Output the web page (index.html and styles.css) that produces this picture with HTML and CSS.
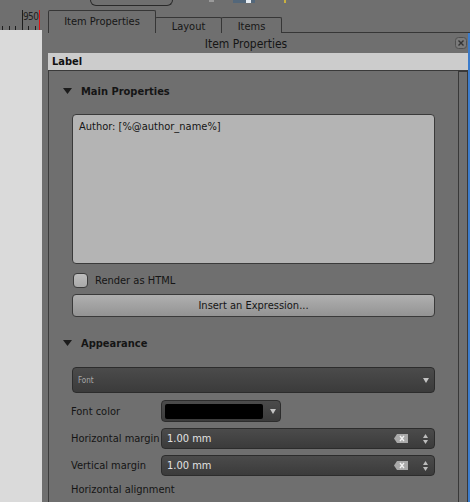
FILE: index.html
```html
<!DOCTYPE html>
<html>
<head>
<meta charset="utf-8">
<link rel="stylesheet" href="styles.css">
</head>
<body>
<div class="app">
  <div class="left">
    <div class="ruler">
      <span class="ruler-major"></span>
      <span class="ruler-num">950</span>
      <span class="ruler-marker"></span>
    </div>
    <div class="canvas-row"><div class="canvas"></div></div>
  </div>
  <div class="right">
    <div class="toolstrip">
      <div class="tb-frame"></div>
      <div class="tb-light"></div>
      <div class="tb-icon"><span class="tb-white"></span></div>
      <div class="tb-yellow"></div>
    </div>
    <div class="tabbar">
      <div class="tab active">Item Properties</div>
      <div class="tab">Layout</div>
      <div class="tab">Items</div>
      <div class="tab-fill"></div>
    </div>
    <div class="dock">
      <div class="dock-title">
        <span class="dock-title-text">Item Properties</span>
        <span class="close">
          <svg width="12" height="12" viewBox="0 0 12 12"><rect x="0.5" y="0.5" width="11" height="11" rx="3" fill="#7a7a7a" stroke="#505050"/><path d="M3.5 3.5 L8.5 8.5 M8.5 3.5 L3.5 8.5" stroke="#333" stroke-width="1.4"/></svg>
        </span>
      </div>
      <div class="label-bar">Label</div>
      <div class="scroll-area">
        <div class="content">
          <div class="section-head">
            <svg width="9" height="6" viewBox="0 0 9 6"><polygon points="0,0 9,0 4.5,6" fill="#1c1c1c"/></svg>
            <span>Main Properties</span>
          </div>
          <div class="textarea">Author: [%@author_name%]</div>
          <div class="check-row">
            <span class="checkbox"></span>
            <span>Render as HTML</span>
          </div>
          <div class="button">Insert an Expression...</div>
          <div class="section-head appearance">
            <svg width="9" height="6" viewBox="0 0 9 6"><polygon points="0,0 9,0 4.5,6" fill="#1c1c1c"/></svg>
            <span>Appearance</span>
          </div>
          <div class="combo">
            <span class="combo-text">Font</span>
            <svg width="6" height="5" viewBox="0 0 6 5"><polygon points="0,0 6,0 3,5" fill="#c4c4c4"/></svg>
          </div>
          <div class="form">
            <span class="form-label">Font color</span>
            <div class="color-btn">
              <span class="swatch"></span>
              <svg width="6" height="5" viewBox="0 0 6 5"><polygon points="0,0 6,0 3,5" fill="#c4c4c4"/></svg>
            </div>
            <span class="form-label">Horizontal margin</span>
            <div class="spin">
              <span class="spin-text">1.00 mm</span>
              <svg class="clear" width="14" height="9" viewBox="0 0 14 9"><path d="M3 0 H14 V9 H3 L0 4.5 Z" fill="#a9a9a9"/><path d="M6 2 L10 7 M10 2 L6 7" stroke="#f2f2f2" stroke-width="1.3"/></svg>
              <svg class="updown" width="5" height="10" viewBox="0 0 5 10"><polygon points="0,4 2.5,0 5,4" fill="#bdbdbd"/><polygon points="0,6 5,6 2.5,10" fill="#bdbdbd"/></svg>
            </div>
            <span class="form-label">Vertical margin</span>
            <div class="spin">
              <span class="spin-text">1.00 mm</span>
              <svg class="clear" width="14" height="9" viewBox="0 0 14 9"><path d="M3 0 H14 V9 H3 L0 4.5 Z" fill="#a9a9a9"/><path d="M6 2 L10 7 M10 2 L6 7" stroke="#f2f2f2" stroke-width="1.3"/></svg>
              <svg class="updown" width="5" height="10" viewBox="0 0 5 10"><polygon points="0,4 2.5,0 5,4" fill="#bdbdbd"/><polygon points="0,6 5,6 2.5,10" fill="#bdbdbd"/></svg>
            </div>
            <span class="form-label wide">Horizontal alignment</span>
          </div>
        </div>
        <div class="scrollbar"></div>
      </div>
    </div>
  </div>
</div>
</body>
</html>
```

FILE: styles.css
```css
* { box-sizing: border-box; }
html, body { margin: 0; padding: 0; }
body {
  width: 470px;
  height: 502px;
  overflow: hidden;
  background: #6f6f6f;
  font-family: "DejaVu Sans Condensed", "DejaVu Sans", sans-serif;
  font-size: 11px;
  color: #151515;
}
.app { display: flex; height: 502px; }

/* left ruler + canvas */
.left { width: 47px; flex: none; display: flex; flex-direction: column; }
.ruler {
  height: 30px;
  position: relative;
  background-image: repeating-linear-gradient(to right, #1e1e1e 0 1px, transparent 1px 6.6px);
  background-size: 40px 4px;
  background-position: 2px 26px;
  background-repeat: no-repeat;
}
.ruler-major { position: absolute; left: 22px; top: 10px; width: 1px; height: 20px; background: #1e1e1e; }
.ruler-num { position: absolute; left: 23px; top: 11px; font-size: 10px; color: #222; letter-spacing: -0.6px; }
.ruler-marker { position: absolute; left: 39px; top: 10px; width: 1px; height: 20px; background: #e31010; }
.canvas-row { flex: 1; display: flex; }
.canvas { width: 42px; background: #dadada; }

/* right column */
.right { flex: 1; display: flex; flex-direction: column; min-width: 0; }
.toolstrip { height: 6px; display: flex; align-items: flex-start; overflow: hidden; }
.tb-frame {
  margin-left: 43px; width: 83px; height: 6px;
  border: 1px solid #2a2a2a; border-top: none;
  border-radius: 0 0 6px 6px;
}
.tb-light { margin-left: 36px; width: 5px; height: 2px; background: #9a9a9a; }
.tb-icon { margin-left: 19px; width: 22px; height: 3px; background: #53677a; display: flex; justify-content: flex-end; }
.tb-white { width: 5px; height: 3px; background: #e8eef4; margin-right: 4px; }
.tb-yellow { margin-left: 29px; width: 2px; height: 3px; background: #c9b040; }

.tabbar { height: 27px; display: flex; align-items: flex-end; }
.tab {
  height: 16px;
  border: 1px solid #363636;
  border-bottom: none;
  border-radius: 2px 2px 0 0;
  display: flex; align-items: center; justify-content: center;
  font-size: 11px;
  color: #161616;
  padding-top: 1px;
}
.tab.active { height: 23px; width: 108px; margin-left: 1px; padding-bottom: 3px; }
.tab:nth-child(2) { width: 67px; margin-left: -1px; }
.tab:nth-child(3) { width: 61px; margin-left: -1px; }
.tab-fill { flex: 1; border-bottom: 1px solid #363636; height: 1px; }

.dock { flex: 1; display: flex; flex-direction: column; border-right: 2px solid #3b7ccc; min-height: 0; }
.dock-title { height: 20px; display: flex; align-items: center; }
.dock-title-text { flex: 1; text-align: center; font-size: 12px; padding-right: 10px; padding-top: 1px; }
.close { width: 12px; height: 12px; margin-right: 1px; display: flex; }
.label-bar {
  height: 18px;
  margin-left: 1px;
  background: #cccccc;
  border-bottom: 1px solid #3a3a3a;
  font-weight: bold;
  padding-left: 4px;
  line-height: 17px;
  color: #111;
}
.scroll-area { flex: 1; display: flex; border-left: 1px solid #3c3c3c; margin-left: 1px; min-height: 0; }
.content { flex: 1; padding: 13px 23px 0 23px; display: flex; flex-direction: column; }
.scrollbar { width: 10px; border: 1px solid #383838; border-bottom: none; }

.section-head { display: flex; align-items: center; gap: 9px; margin-left: -9px; height: 14px; font-weight: bold; color: #151515; }
.section-head svg { flex: none; }
.textarea {
  margin-top: 16px;
  height: 150px;
  background: #b4b4b4;
  border: 1px solid #3a3a3a;
  border-radius: 4px;
  padding: 5px 6px;
  color: #151515;
}
.check-row { margin-top: 8px; height: 16px; display: flex; align-items: center; gap: 7px; }
.checkbox {
  width: 15px; height: 15px; margin-left: 1px;
  background: linear-gradient(#bdbdbd, #a9a9a9);
  border: 1px solid #3c3c3c;
  border-radius: 4px;
}
.button {
  margin-top: 6px;
  height: 23px;
  border: 1px solid #3a3a3a;
  border-radius: 4px;
  background: linear-gradient(#b0b0b0, #939393);
  display: flex; align-items: center; justify-content: center;
  color: #151515;
}
.appearance { margin-top: 19px; }
.combo {
  margin-top: 17px;
  height: 26px;
  border: 1px solid #2c2c2c;
  border-radius: 4px;
  background: linear-gradient(#4b4b4b, #3b3b3b);
  display: flex; align-items: center; justify-content: space-between;
  padding: 0 5px;
}
.combo-text { font-size: 8px; color: #a8a8a8; }
.form {
  margin-top: 7px;
  display: grid;
  grid-template-columns: 89px 1fr;
  grid-template-rows: 22px 21px 21px 14px;
  row-gap: 6px;
  align-items: center;
}
.form-label { margin-left: -1px; white-space: nowrap; }
.form-label.wide { grid-column: 1 / span 2; }
.color-btn {
  width: 120px; height: 22px;
  border: 1px solid #2c2c2c;
  border-radius: 4px;
  background: linear-gradient(#4b4b4b, #3b3b3b);
  display: flex; align-items: center;
  padding-left: 3px;
}
.swatch { width: 98px; height: 15px; background: #000; border-radius: 2px; }
.color-btn svg { margin-left: 7px; }
.spin {
  height: 21px;
  border: 1px solid #2c2c2c;
  border-radius: 4px;
  background: linear-gradient(#4b4b4b, #3b3b3b);
  display: flex; align-items: center;
  padding-left: 5px;
}
.spin-text { flex: 1; color: #e2e2e2; }
.clear { flex: none; }
.updown { flex: none; margin-left: 15px; margin-right: 6px; }
```
